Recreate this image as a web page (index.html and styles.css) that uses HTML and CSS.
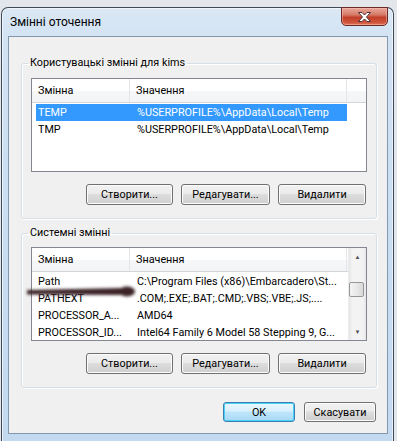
FILE: index.html
```html
<!DOCTYPE html>
<html lang="uk">
<head>
  <meta charset="UTF-8">
  <meta name="viewport" content="width=device-width, initial-scale=1.0">
  <link rel="stylesheet" href="styles.css">
</head>
<body>
<div class="window">
  <div class="titlebar">
    <span class="title">Змінні оточення</span>
    <button class="close" aria-label="Закрити">
      <svg width="15" height="10" viewBox="0 0 15 10">
        <path d="M1.5 0.5 H5 L7.5 3 L10 0.5 H13.5 L9.5 5 L13.5 9.5 H10 L7.5 7 L5 9.5 H1.5 L5.5 5 Z"
              fill="#fff" stroke="#4a3434" stroke-width="1" stroke-linejoin="round"/>
      </svg>
    </button>
  </div>

  <div class="client">
    <fieldset class="group">
      <legend>Користувацькі змінні для kims</legend>
      <div class="list">
        <div class="list-head">
          <span class="col-name">Змінна</span>
          <span class="col-value">Значення</span>
        </div>
        <div class="row selected"><span class="col-name">TEMP</span><span class="col-value">%USERPROFILE%\AppData\Local\Temp</span></div>
        <div class="row"><span class="col-name">TMP</span><span class="col-value">%USERPROFILE%\AppData\Local\Temp</span></div>
      </div>
      <div class="actions">
        <button class="btn btn-create">Створити...</button>
        <button class="btn btn-edit">Редагувати...</button>
        <button class="btn btn-delete">Видалити</button>
      </div>
    </fieldset>

    <fieldset class="group group-system">
      <legend>Системні змінні</legend>
      <div class="list list-scroll">
        <div class="list-main">
          <div class="list-head">
            <span class="col-name">Змінна</span>
            <span class="col-value">Значення</span>
          </div>
          <div class="row"><span class="col-name">Path</span><span class="col-value">C:\Program Files (x86)\Embarcadero\St...</span></div>
          <div class="row"><span class="col-name">PATHEXT</span><span class="col-value">.COM;.EXE;.BAT;.CMD;.VBS;.VBE;.JS;....</span></div>
          <div class="row"><span class="col-name">PROCESSOR_A...</span><span class="col-value">AMD64</span></div>
          <div class="row"><span class="col-name">PROCESSOR_ID...</span><span class="col-value">Intel64 Family 6 Model 58 Stepping 9, G...</span></div>
        </div>
        <div class="scrollbar">
          <span class="sb-arrow">&#9650;</span>
          <div class="sb-track"><div class="sb-thumb"></div></div>
          <span class="sb-arrow">&#9660;</span>
        </div>
      </div>
      <div class="actions">
        <button class="btn btn-create">Створити...</button>
        <button class="btn btn-edit">Редагувати...</button>
        <button class="btn btn-delete">Видалити</button>
      </div>
    </fieldset>

    <div class="dialog-actions">
      <button class="btn btn-dialog btn-default">OK</button>
      <button class="btn btn-dialog">Скасувати</button>
    </div>
  </div>
</div>

<svg class="pointer" width="160" height="30" viewBox="0 0 160 30">
  <defs>
    <filter id="smudge" x="-20%" y="-100%" width="140%" height="300%">
      <feGaussianBlur stdDeviation="1.6"/>
    </filter>
  </defs>
  <g filter="url(#smudge)" fill="#3a2026">
    <path d="M27 13 L122 11 L123 18 L27 17.5 Z"/>
    <ellipse cx="127" cy="14.5" rx="8" ry="5"/>
  </g>
</svg>
</body>
</html>
```

FILE: styles.css
```css
body {
  margin: 0;
  padding: 0;
  background: #e3e6ea;
  font-family: Roboto, "Open Sans", sans-serif;
  font-size: 10.8px;
  color: #000;
  position: relative;
  height: 441px;
  overflow: hidden;
}

.window {
  margin: 7px 0 0 1px;
  width: 393px;
  height: 440px;
  box-sizing: border-box;
  border: 1px solid #3f4b58;
  border-bottom: none;
  border-radius: 7px 7px 0 0;
  background: linear-gradient(180deg, #dbe8f5 0%, #d1e2f3 8%, #c2d9f0 100%);
  padding: 0 5px 0 6px;
  box-shadow: inset 0 0 0 1px rgba(255, 255, 255, 0.6);
}

.titlebar {
  height: 28px;
  display: flex;
  align-items: flex-start;
  justify-content: space-between;
}

.title {
  line-height: 29px;
  padding-left: 2px;
  font-size: 12px;
  color: #000;
}

.close {
  width: 47px;
  height: 19px;
  margin-top: -1px;
  padding: 0;
  border: 1px solid #6b2a24;
  border-radius: 0 0 5px 5px;
  background: linear-gradient(180deg, #e8a89c 0%, #d67a67 40%, #c23f2a 55%, #cf553c 85%, #e07a5e 100%);
  box-shadow: inset 0 0 0 1px rgba(255, 200, 190, 0.45);
  display: flex;
  align-items: center;
  justify-content: center;
}

.close svg {
  display: block;
  margin-top: 1px;
}

.client {
  width: 380px;
  height: 398px;
  box-sizing: border-box;
  background: #f0f0f0;
  border: 1px solid #8297ad;
  padding: 0 10px 0 12px;
}

.group {
  margin: 18px 0 0 0;
  width: 356px;
  box-sizing: border-box;
  border: 1px solid #d5dfe5;
  border-radius: 3px;
  box-shadow: inset 1px 1px 0 #fff, 1px 1px 0 #fff;
  padding: 7px 9px 13px 9px;
}

.group-system {
  margin-top: 6px;
  padding-top: 6px;
}

.group legend {
  padding: 0 2px;
  margin-left: -3px;
  line-height: 16px;
  color: #000;
}

.list {
  height: 94px;
  box-sizing: border-box;
  border: 1px solid #828790;
  background: #fff;
  overflow: hidden;
}

.list-head {
  height: 24px;
  box-sizing: border-box;
  display: flex;
  align-items: center;
  border-bottom: 1px solid #d5d5d5;
  background: linear-gradient(180deg, #fff 0%, #fff 50%, #f6f7f8 51%, #f3f4f6 100%);
  margin-bottom: 1px;
}

.list-head .col-name {
  width: 98px;
  padding-left: 6px;
  box-sizing: border-box;
  border-right: 1px solid #e3e5e8;
  height: 100%;
  line-height: 23px;
}

.list-head .col-value {
  width: 217px;
  padding-left: 6px;
  box-sizing: border-box;
  border-right: 1px solid #e3e5e8;
  height: 100%;
  line-height: 23px;
}

.row {
  height: 17px;
  line-height: 17px;
  margin-left: 4px;
  width: 311px;
  display: flex;
  white-space: nowrap;
}

.row .col-name {
  width: 95px;
  padding-left: 2px;
  box-sizing: border-box;
  overflow: hidden;
}

.row .col-value {
  flex: 1;
  padding-left: 6px;
  overflow: hidden;
}

.row.selected {
  background: #3399ff;
  color: #fff;
}

.list-scroll {
  display: flex;
}

.list-main {
  flex: 1;
  min-width: 0;
}

.scrollbar {
  width: 17px;
  display: flex;
  flex-direction: column;
  background: linear-gradient(90deg, #e6e6e6 0%, #f3f3f3 20%, #f3f3f3 80%, #e6e6e6 100%);
  border-left: 1px solid #ececec;
}

.sb-arrow {
  height: 17px;
  line-height: 17px;
  text-align: center;
  font-size: 6px;
  color: #4d4d4d;
}

.sb-track {
  flex: 1;
  padding-top: 17px;
}

.sb-thumb {
  height: 15px;
  width: 15px;
  box-sizing: border-box;
  border: 1px solid #979797;
  border-radius: 2px;
  background: linear-gradient(90deg, #f4f4f4 0%, #e9e9e9 50%, #d9d9d9 100%);
}

.actions {
  display: flex;
  justify-content: flex-end;
  gap: 8px;
  margin-top: 12px;
  padding-right: 1px;
}

.btn {
  height: 21px;
  padding: 0;
  box-sizing: border-box;
  font-family: inherit;
  font-size: 10.8px;
  color: #000;
  border: 1px solid #707070;
  border-radius: 3px;
  background: linear-gradient(180deg, #f2f2f2 0%, #ebebeb 45%, #dddddd 50%, #cfcfcf 100%);
  box-shadow: inset 0 0 0 1px #fcfcfc;
}

.btn-create { width: 87px; }
.btn-edit { width: 89px; }
.btn-delete { width: 88px; }

.dialog-actions {
  display: flex;
  justify-content: flex-end;
  gap: 9px;
  margin-top: 14px;
  padding-right: 1px;
}

.btn-dialog {
  width: 72px;
  height: 20px;
}

.btn-default {
  border-color: #3c7fb1;
  box-shadow: inset 0 0 0 1px #48d2f8;
  background: linear-gradient(180deg, #eaf6fd 0%, #d9f0fc 45%, #bee6fd 50%, #a7d9f5 100%);
}

.pointer {
  position: absolute;
  left: 0;
  top: 277px;
  pointer-events: none;
}
```
